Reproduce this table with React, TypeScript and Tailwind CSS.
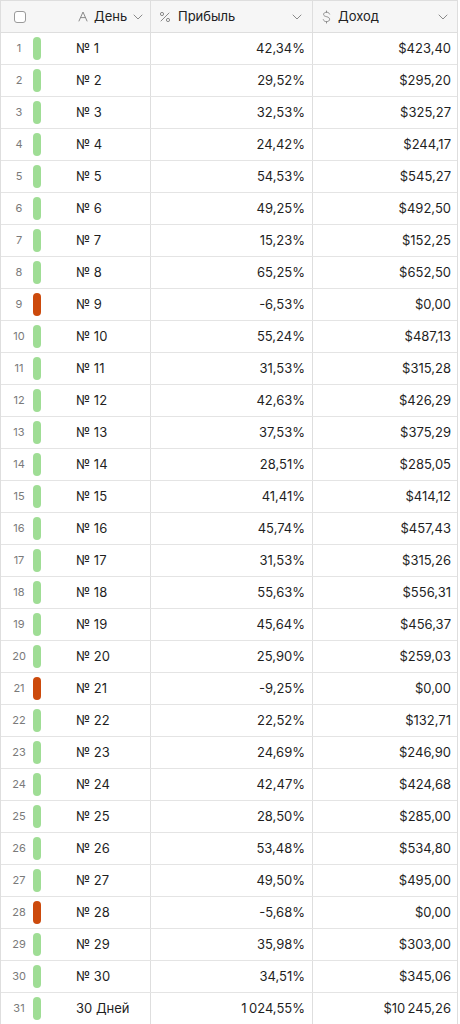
const rows: [string, string, string, boolean][] = [
  ["№ 1", "42,34%", "$423,40", true],
  ["№ 2", "29,52%", "$295,20", true],
  ["№ 3", "32,53%", "$325,27", true],
  ["№ 4", "24,42%", "$244,17", true],
  ["№ 5", "54,53%", "$545,27", true],
  ["№ 6", "49,25%", "$492,50", true],
  ["№ 7", "15,23%", "$152,25", true],
  ["№ 8", "65,25%", "$652,50", true],
  ["№ 9", "-6,53%", "$0,00", false],
  ["№ 10", "55,24%", "$487,13", true],
  ["№ 11", "31,53%", "$315,28", true],
  ["№ 12", "42,63%", "$426,29", true],
  ["№ 13", "37,53%", "$375,29", true],
  ["№ 14", "28,51%", "$285,05", true],
  ["№ 15", "41,41%", "$414,12", true],
  ["№ 16", "45,74%", "$457,43", true],
  ["№ 17", "31,53%", "$315,26", true],
  ["№ 18", "55,63%", "$556,31", true],
  ["№ 19", "45,64%", "$456,37", true],
  ["№ 20", "25,90%", "$259,03", true],
  ["№ 21", "-9,25%", "$0,00", false],
  ["№ 22", "22,52%", "$132,71", true],
  ["№ 23", "24,69%", "$246,90", true],
  ["№ 24", "42,47%", "$424,68", true],
  ["№ 25", "28,50%", "$285,00", true],
  ["№ 26", "53,48%", "$534,80", true],
  ["№ 27", "49,50%", "$495,00", true],
  ["№ 28", "-5,68%", "$0,00", false],
  ["№ 29", "35,98%", "$303,00", true],
  ["№ 30", "34,51%", "$345,06", true],
  ["30 Дней", "1\u2009024,55%", "$10\u2009245,26", true],
];

const Chevron = ({ className }: { className?: string }) => (
  <svg className={className} width="10" height="6" viewBox="0 0 10 6" fill="none">
    <path d="M1 1l4 4 4-4" stroke="#8a8a8a" strokeWidth="1" strokeLinecap="round" strokeLinejoin="round" />
  </svg>
);

const TextIcon = () => (
  <svg width="10" height="11" viewBox="0 0 10 11" fill="none">
    <path d="M1 10L5 1l4 9M2.6 6.6h4.8" stroke="#8a8a8a" strokeWidth="1" strokeLinecap="round" strokeLinejoin="round" />
  </svg>
);

const PercentIcon = () => (
  <svg width="12" height="12" viewBox="0 0 12 12" fill="none">
    <circle cx="3" cy="3" r="1.6" stroke="#8a8a8a" strokeWidth="1" />
    <circle cx="9" cy="9" r="1.6" stroke="#8a8a8a" strokeWidth="1" />
    <path d="M10 2L2 10" stroke="#8a8a8a" strokeWidth="1" strokeLinecap="round" />
  </svg>
);

const DollarIcon = () => (
  <svg width="9" height="14" viewBox="0 0 9 14" fill="none">
    <path
      d="M7.6 4C7.2 2.9 6.1 2.3 4.6 2.3 2.8 2.3 1.6 3.1 1.6 4.4c0 3 6 1.5 6 4.9 0 1.4-1.3 2.3-3.1 2.3-1.6 0-2.8-.7-3.2-1.9M4.5 1v1.3M4.5 11.6V13"
      stroke="#8a8a8a"
      strokeWidth="1"
      strokeLinecap="round"
    />
  </svg>
);

const App = () => {
  return (
    <div
      className="w-[460px] h-[1024px] overflow-hidden bg-white text-[13px] text-[#1f1f1f]"
      style={{ fontFamily: "Inter, 'Noto Sans', sans-serif" }}
    >
      <div className="w-[458px] border-l border-r border-[#dedede]">
        <div className="flex h-[33px] border-t border-b border-[#dedede] bg-[#f6f6f6]">
          <div className="flex w-[150px] items-center border-r border-[#dedede] pl-[13px]">
            <span className="w-3 h-3 rounded-[3px] border border-[#9a9a9a] bg-white" />
            <span className="ml-[52px] flex items-center">
              <TextIcon />
            </span>
            <span className="ml-[6px] text-[#222]">День</span>
            <Chevron className="ml-[6px]" />
          </div>
          <div className="flex w-[162px] items-center border-r border-[#dedede] pl-[8px] pr-[10px]">
            <PercentIcon />
            <span className="ml-[7px] text-[#222]">Прибыль</span>
            <Chevron className="ml-auto" />
          </div>
          <div className="flex flex-1 items-center pl-[9px] pr-[9px]">
            <DollarIcon />
            <span className="ml-[7px] text-[#222]">Доход</span>
            <Chevron className="ml-auto" />
          </div>
        </div>
        {rows.map(([day, profit, income, ok], i) => (
          <div key={i} className="flex h-8 border-b border-[#e4e4e4]">
            <div className="flex w-[150px] items-center border-r border-[#dedede] pl-[6px]">
              <span className="w-6 text-center text-[11px] text-[#7a7a7a]">{i + 1}</span>
              <span
                className={
                  ok
                    ? "ml-[2px] h-[23px] w-2 rounded-full bg-[#9fdd95]"
                    : "ml-[2px] h-[23px] w-2 rounded-full bg-[#cc4a0c]"
                }
              />
              <span className="ml-[35px]">{day}</span>
            </div>
            <div className="flex w-[162px] items-center justify-end border-r border-[#dedede] pr-[7px]">
              {profit}
            </div>
            <div className="flex flex-1 items-center justify-end pr-[6px]">{income}</div>
          </div>
        ))}
      </div>
    </div>
  );
};

export default App;
